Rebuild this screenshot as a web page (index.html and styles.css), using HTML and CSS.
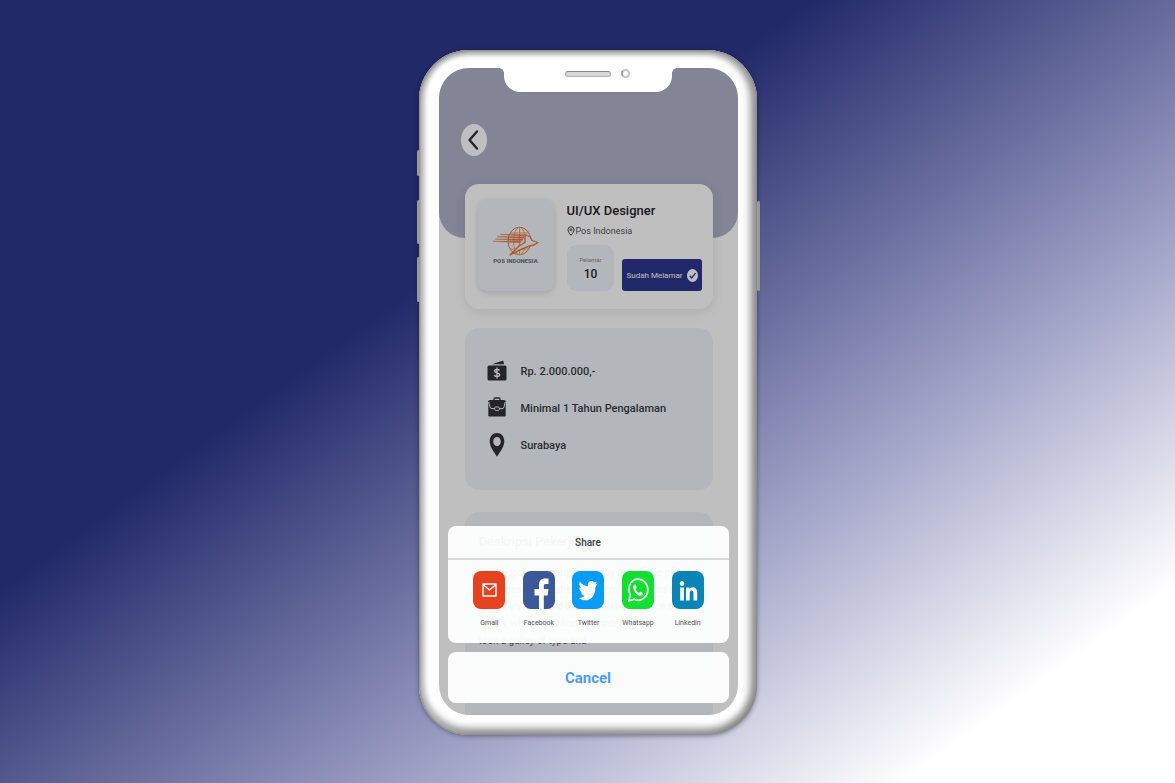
FILE: index.html
```html
<!DOCTYPE html>
<html lang="id">
<head>
<meta charset="utf-8">
<meta name="viewport" content="width=device-width, initial-scale=1">
<title>UI/UX Designer – Pos Indonesia</title>
<link rel="stylesheet" href="styles.css">
</head>
<body>
<main class="phone">
  <span class="key key-mute"></span>
  <span class="key key-up"></span>
  <span class="key key-down"></span>
  <span class="key key-power"></span>
  <div class="screen">
    <div class="page">
      <header class="hero">
        <button class="back" type="button" aria-label="Kembali">
          <svg viewBox="0 0 26 32" width="26" height="32"><path d="M16 7.500L8.500 16l7.500 8.500" fill="none" stroke="#30303a" stroke-width="2.400" stroke-linecap="round" stroke-linejoin="round"/></svg>
        </button>
      </header>
      <section class="job">
        <div class="logo">
          <svg viewBox="0 0 46 31" width="46" height="31" role="img" aria-label="Pos Indonesia">
            <g fill="none" stroke="#f0a25e" stroke-width="1">
              <ellipse cx="26.500" cy="15" rx="11.500" ry="13.800" stroke="#e8703c"/>
              <ellipse cx="26.500" cy="15" rx="6" ry="13.800"/>
              <path d="M26.500 1v28M17 7h19M15 15h10M17 23h19"/>
            </g>
            <path d="M32 9l5 1.500 2 4 6 2-4 2.500c-7 1-13 4-24 10l9-9 6-3.500z" fill="#eff4fb" stroke="#e8703c" stroke-width="1.300" stroke-linejoin="round"/>
            <path d="M7 8.500l25 .3-1 1.200zM4 10.800l27 .1-.5 1.400zM2 13l28 .1-.8 1.400zM0 15.300l28.500 0-1.500 1.400z" fill="#e8703c" stroke="#e8703c" stroke-width=".4"/>
          </svg>
          <span class="logo-name">POS INDONESIA</span>
        </div>
        <div class="job-text">
          <h1>UI/UX Designer</h1>
          <p class="company">
            <svg viewBox="0 0 8 10" width="8" height="10" fill="none" stroke="#44444c" stroke-width="1"><path d="M4 9.300C2 7 1 5.500 1 3.700a3 3 0 0 1 6 0C7 5.500 6 7 4 9.300z"/><circle cx="4" cy="3.800" r="1"/></svg>
            Pos Indonesia
          </p>
          <div class="job-row">
            <div class="count"><span>Pelamar</span><strong>10</strong></div>
            <button class="applied" type="button">Sudah Melamar
              <svg viewBox="0 0 11 13" width="11" height="13"><ellipse cx="5.500" cy="6.500" rx="5.500" ry="6.500" fill="#fff"/><path d="M2.700 6.800l2 2.200 3.800-4.800" fill="none" stroke="#2d368c" stroke-width="1.300"/></svg>
            </button>
          </div>
        </div>
      </section>
      <ul class="facts">
        <li>
          <svg viewBox="0 0 20 22" width="20" height="22"><path d="M5 4.300L15.500.8q.8-.2 1 .6l.5 2.900z" fill="#31313a"/><rect x="0.500" y="5.500" width="19" height="15" rx="1.500" fill="#31313a"/><path d="M12.500 10.500c-.5-1.300-5-1.500-5 .6 0 2.400 5.200 1.300 5.200 3.700 0 2.300-5 2-5.400.2M10 7.500v11" fill="none" stroke="#eff4fb" stroke-width="1.400"/></svg>
          Rp. 2.000.000,-
        </li>
        <li>
          <svg viewBox="0 0 20 22" width="20" height="22"><path d="M7 3.500V2Q7 1 8 1h4q1 0 1 1v1.500" fill="none" stroke="#31313a" stroke-width="1.300"/><path d="M2.500 3h15l1.200 1v14.500q0 1-1 1H2.300q-1 0-1-1V4z" fill="#31313a"/><path d="M1.800 5l1.200 5q.4 1.600 2 1.600h10q1.600 0 2-1.600l1.200-5" fill="none" stroke="#eff4fb" stroke-width="1"/><rect x="7.700" y="10" width="4.600" height="3.400" rx="1" fill="#31313a" stroke="#eff4fb" stroke-width=".9"/></svg>
          Minimal 1 Tahun Pengalaman
        </li>
        <li>
          <svg viewBox="0 0 20 24" width="20" height="24"><path fill-rule="evenodd" d="M10 0c4.300 0 7.300 3.500 7.300 8.300 0 5.200-3.600 9.800-7.300 15.400C6.300 18.100 2.700 13.500 2.700 8.300 2.700 3.500 5.700 0 10 0zm0 4C7.800 4 6.200 5.900 6.200 8.600s1.600 4.600 3.800 4.600 3.800-1.900 3.800-4.600S12.200 4 10 4z" fill="#31313a"/></svg>
          Surabaya
        </li>
      </ul>
      <article class="about">
        <h2>Deskripsi Pekerjaan</h2>
        <p>Lorem Ipsum is simply dummy text of the printing and typesetting industry. Lorem Ipsum has been the industry's standard dummy text ever since the 1500s, when an unknown printer<br>took a galley of type and</p>
      </article>
      <article class="about">
        <h2>Syarat Pekerjaan</h2>
      </article>
    </div>
    <div class="shade"></div>
    <div class="notch"><span class="speaker"></span><span class="camera"></span></div>
    <div class="sheet" role="dialog" aria-labelledby="share-title">
      <section class="share">
        <h2 id="share-title">Share</h2>
        <div class="apps">
          <button type="button">
            <svg viewBox="0 0 32 38"><rect width="32" height="38" rx="8" fill="#e54320"/><path d="M10 13h13v12H10zM10 13.500l6.500 5.500 6.500-5.500" fill="none" stroke="#fff" stroke-width="1.400" stroke-linejoin="round"/></svg>
            Gmail
          </button>
          <button type="button">
            <svg viewBox="0 0 32 38"><rect width="32" height="38" rx="8" fill="#3b5998"/><path d="M16 38V24.500h-4.500V18H16v-4.200C16 9.500 18.500 7.500 22 7.500h3.500V13h-2.600c-1.700 0-2.100.8-2.100 2.200V18h4.700l-.8 6.500h-3.900V38z" fill="#fff"/></svg>
            Facebook
          </button>
          <button type="button">
            <svg viewBox="0 0 32 38"><rect width="32" height="38" rx="8" fill="#0a9bf5"/><path d="M25.500 12.500l-2.200.8 1.800-2.900-2.500 1.200c-2.800-3.500-7.600-.9-6.700 3.800-3.300-.2-6-1.900-8-4.800-1.200 2.400-.5 5 1.200 6.500l-1.700-.6c0 2.500 1.300 4.300 3.100 5l-1.600.1c.5 1.800 2 3.100 3.700 3.200-1.700 1.600-3.600 2.200-5.800 2.100 8 6 16.700.5 16.600-10.500z" fill="#fff"/></svg>
            Twitter
          </button>
          <button type="button">
            <svg viewBox="0 0 32 38"><rect width="32" height="38" rx="8" fill="#12df31"/><path d="M6.800 30l1.500-6.200C4.500 16.500 9 8.200 16 8.200c5.400 0 9.800 4.500 9.800 10.500 0 7.600-7.200 12.700-13.800 9.600z" fill="none" stroke="#fff" stroke-width="1.700" stroke-linejoin="round"/><path d="M13.200 13.300c-3.700 1.500-1.600 6.700.7 9 2.300 2.400 6.400 3.800 7.100.2l-2.500-2-1.400 1.400c-1.600-.8-2.700-2-3.400-4l1-1.400z" fill="#fff"/></svg>
            Whatsapp
          </button>
          <button type="button">
            <svg viewBox="0 0 32 38"><rect width="32" height="38" rx="8" fill="#0984b4"/><ellipse cx="10" cy="12.500" rx="2.200" ry="2.500" fill="#fff"/><path d="M8.200 16.500h3.700V29.500H8.200zM14 16.500h3.500v1.800c1.800-3.300 7.700-2.800 7.700 3.400v7.800h-3.700v-7c0-4.200-3.800-3.800-3.800 0v7H14z" fill="#fff"/></svg>
            Linkedin
          </button>
        </div>
      </section>
      <button class="cancel" type="button">Cancel</button>
    </div>
  </div>
</main>
</body>
</html>
```
FILE: styles.css
```css
* { box-sizing: border-box; }
body {
  margin: 0;
  min-height: 100vh;
  display: grid;
  justify-items: center;
  align-items: center;
  padding: 50px 16px 48px;
  font-family: Roboto, "Liberation Sans", sans-serif;
  font-size: 12px;
  color: #3a3a42;
  background: linear-gradient(144deg, #222969 36%, #9fa1c6 66%, #fff 88%);
}
h1, h2, p, ul { margin: 0; padding: 0; }
button { border: 0; font: inherit; color: inherit; cursor: pointer; }
svg { flex: none; }

.phone {
  position: relative;
  width: 100%;
  max-width: 338px;
  padding: 18px 19px 20px 20px;
  border-radius: 50px;
  background: #fff;
  box-shadow:
    inset 0 0 2px 1px #888,
    inset 0 4px 5px #aaa,
    inset 5px 0 5px #bbb,
    inset -6px 0 9px #8a8a8a,
    inset 0 -6px 9px #8a8a8a,
    0 1px 5px rgba(0, 0, 0, .4);
}
.key {
  position: absolute;
  width: 3px;
  border-radius: 2px;
  background: #999;
}
.key-mute { left: -2px; top: 100px; height: 26px; }
.key-up { left: -2px; top: 150px; height: 44px; }
.key-down { left: -2px; top: 207px; height: 45px; }
.key-power { right: -3px; top: 151px; height: 90px; }

.screen {
  position: relative;
  display: grid;
  overflow: hidden;
  height: 647px;
  border-radius: 30px;
  background: #fff;
}
.page { display: flex; flex-direction: column; min-width: 0; }
.hero {
  height: 170px;
  flex: none;
  padding: 56px 22px;
  border-radius: 0 0 26px 26px;
  background: #afb0c7;
}
.back {
  display: block;
  width: 26px;
  height: 32px;
  padding: 0;
  border-radius: 50%;
  background: #fff;
}
.job, .facts, .about { flex: none; margin: 0 25px 0 26px; border-radius: 14px; }
.job {
  display: flex;
  gap: 13px;
  margin-top: -54px;
  padding: 15px 11px 18px 13px;
  background: #fff;
  box-shadow: 0 3px 12px rgba(0, 0, 0, .1);
}
.logo {
  flex: none;
  width: 76px;
  display: flex;
  flex-direction: column;
  align-items: center;
  justify-content: center;
  border-radius: 9px;
  background: #eff4fb;
  box-shadow: 0 2px 6px rgba(0, 0, 0, .16);
}
.logo-name { font-size: 6px; line-height: 8px; font-weight: 900; color: #777; }
.job-text { flex: 1; min-width: 0; }
h1 { padding-top: 2px; font-size: 13px; line-height: 19px; font-weight: 500; color: #25252c; }
.company {
  display: flex;
  align-items: center;
  gap: 1px;
  margin: 5px 0 8px;
  font-size: 9px;
  line-height: 12px;
  color: #55555c;
}
.job-row { display: flex; align-items: flex-end; gap: 8px; }
.count {
  flex: 1;
  height: 46px;
  display: flex;
  flex-direction: column;
  align-items: center;
  justify-content: center;
  border-radius: 9px;
  background: #eff4fb;
}
.count span { font-size: 6px; line-height: 12px; color: #888; }
.count strong { font-size: 12px; line-height: 16px; font-weight: 500; color: #25252c; }
.applied {
  display: flex;
  align-items: center;
  justify-content: center;
  gap: 4px;
  height: 32px;
  padding: 0 4px;
  border-radius: 3px;
  background: #2d368c;
  color: #fff;
  font-size: 8px;
  white-space: nowrap;
}
.facts {
  display: flex;
  flex-direction: column;
  gap: 13px;
  margin-top: 19px;
  padding: 31px 22px 33px;
  background: #eff4fb;
  list-style: none;
}
.facts li { display: flex; align-items: center; gap: 14px; min-height: 24px; font-size: 11px; font-weight: 500; }
.about { margin-top: 22px; padding: 20px 0 24px 14px; background: #eff4fb; }
.about + .about { margin-top: 18px; }
.about h2 { font-size: 13px; line-height: 20px; font-weight: 400; }
.about p { margin-top: 12px; font-size: 10px; line-height: 17px; color: #666; }

.shade { position: absolute; inset: 0; background: rgba(0, 0, 0, .25); }
.notch {
  position: absolute;
  top: 0;
  left: 22%;
  right: 22%;
  height: 24px;
  border-radius: 0 0 16px 16px;
  background: #fff;
}
.notch::before, .notch::after {
  content: "";
  position: absolute;
  top: 0;
  width: 4px;
  height: 4px;
}
.notch::before { right: 100%; background: radial-gradient(circle at 0 100%, transparent 3px, #fff 4px); }
.notch::after { left: 100%; background: radial-gradient(circle at 100% 100%, transparent 3px, #fff 4px); }
.speaker {
  position: absolute;
  top: 3px;
  left: 36%;
  width: 46px;
  height: 6px;
  border: 1px solid #b5b5b5;
  border-top-color: #888;
  border-radius: 3px;
  background: #d8d8d8;
}
.camera {
  position: absolute;
  top: 1px;
  right: 25%;
  width: 9px;
  height: 9px;
  border: 2px solid #c4c4c4;
  border-left-color: #999;
  border-radius: 50%;
}
.sheet {
  position: absolute;
  inset: auto 9px 12px;
  display: flex;
  flex-direction: column;
  gap: 9px;
}
.share, .cancel { border-radius: 8px; background: rgba(255, 255, 255, .95); }
.share h2 {
  padding: 9px 0 7px;
  border-bottom: 2px solid #d8d8da;
  font-size: 10px;
  line-height: 16px;
  font-weight: 500;
  text-align: center;
}
.apps { display: flex; justify-content: space-between; padding: 11px 16px 14px 17px; }
.apps button {
  display: flex;
  flex-direction: column;
  align-items: center;
  gap: 9px;
  flex: 1;
  padding: 0;
  background: none;
  font-size: 7px;
  line-height: 11px;
  color: #555;
}
.apps svg { width: 32px; height: 38px; }
.cancel { height: 51px; color: #4a9dfb; font-size: 15px; font-weight: 700; }
```
